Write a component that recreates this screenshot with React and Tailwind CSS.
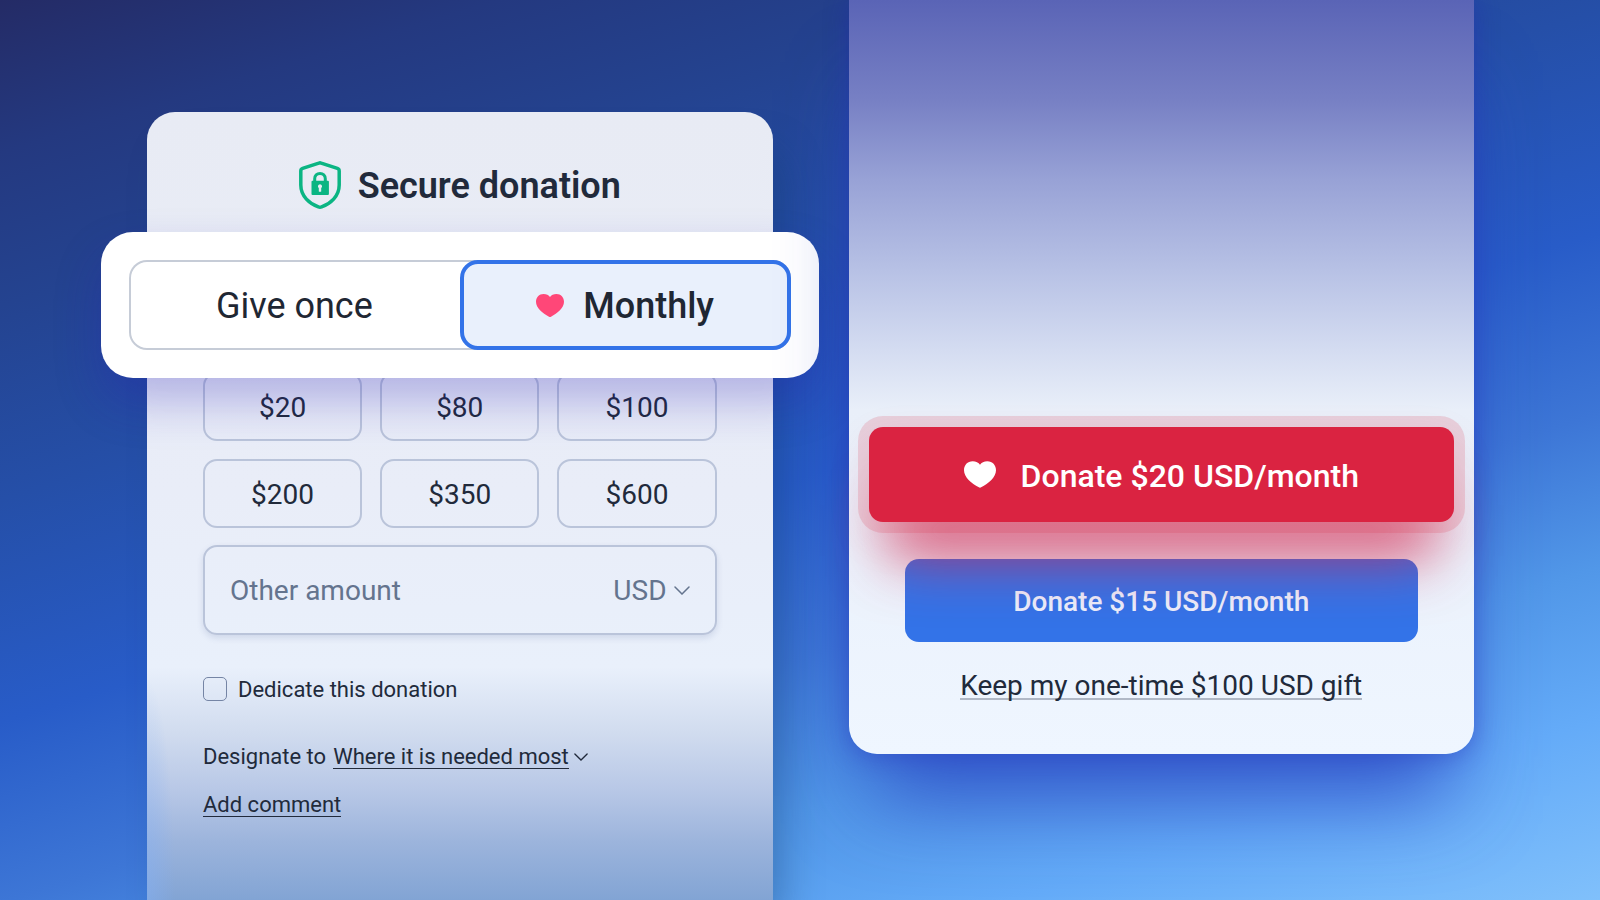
import { useState } from "react";

const AMOUNTS = ["$20", "$80", "$100", "$200", "$350", "$600"];

function Heart({ className }) {
  return (
    <svg viewBox="0 0 28 23" className={className} fill="currentColor" aria-hidden="true">
      <path d="M7.6 0C10.4 0 12.8 1.1 14 2.9C15.2 1.1 17.6 0 20.4 0C25 0 28 3.4 28 7.8C28 14 21.5 19.2 15 22.7C14.4 23.1 13.6 23.1 13 22.7C6.5 19.2 0 14 0 7.8C0 3.4 3 0 7.6 0Z" />
    </svg>
  );
}

function Shield() {
  return (
    <svg viewBox="0 0 42 48" className="h-12 w-[42px] text-[#0bb583]" fill="none" aria-hidden="true">
      <path
        d="M19.8 2.1C20.6 1.8 21.4 1.8 22.2 2.1L38.4 7.4C39.6 7.8 40.2 8.6 40.2 9.9V24C40.2 35.4 31.2 42.8 22.6 45.9C21.5 46.3 20.5 46.3 19.4 45.9C10.8 42.8 1.8 35.4 1.8 24V9.9C1.8 8.6 2.4 7.8 3.6 7.4Z"
        stroke="currentColor"
        strokeWidth="3.5"
      />
      <path d="M15.7 21V17.7C15.7 14.7 18 12.4 21 12.4C24 12.4 26.3 14.7 26.3 17.7V21" stroke="currentColor" strokeWidth="3" />
      <path
        fillRule="evenodd"
        d="M13.5 19.8H28.9Q29.9 19.8 29.9 20.8V33Q29.9 34 28.9 34H13.5Q12.5 34 12.5 33V20.8Q12.5 19.8 13.5 19.8ZM21 23.2A2.1 2.1 0 0 0 19.8 27V30.2Q19.8 30.8 20.4 30.8H21.6Q22.2 30.8 22.2 30.2V27A2.1 2.1 0 0 0 21 23.2Z"
        fill="currentColor"
      />
    </svg>
  );
}

function Chevron({ className }) {
  return (
    <svg viewBox="0 0 16 9" className={className} fill="none" stroke="currentColor" aria-hidden="true">
      <path d="M1 1L8 8L15 1" strokeWidth="1.5" strokeLinecap="round" />
    </svg>
  );
}

export default function App() {
  const [monthly, setMonthly] = useState(true);
  const [amount, setAmount] = useState("");

  return (
    <div className="flex min-h-screen items-stretch gap-[76px] overflow-hidden bg-[linear-gradient(163deg,#242b66_0%,#243980_11%,#244390_22%,#254fa8_36%,#285cc8_52%,#3d76d6_65%,#5197e8_76%,#64abf8_87%,#80c0fb_100%)] pr-[126px] pl-[147px] font-[Roboto,sans-serif] text-[#212a3b]">
      <form
        onSubmit={(e) => e.preventDefault()}
        className="relative isolate mt-28 flex-1 rounded-t-[28px] bg-[radial-gradient(28px_220px_at_0_100%,rgba(130,175,245,0.5),transparent),linear-gradient(180deg,#e8ebf4_0px,#e9edf8_380px,#e9f0fb_555px,#d1dcef_620px,#b7c7e6_680px,#9cb4dc_730px,#82a4d4_788px)] px-14 pt-[49px] pb-20 shadow-[16px_32px_40px_-8px_rgba(20,60,110,0.4)]"
      >
        <h1 className="flex h-12 items-center justify-center gap-[17px] text-4xl leading-[44px] font-semibold">
          <Shield />
          <span className="pt-0.5">Secure donation</span>
        </h1>

        <div className="relative z-10 -mx-[102px] mt-[23px] rounded-[32px] bg-white p-7 shadow-[0_24px_46px_rgba(40,30,180,0.28)]">
          <div className="grid h-[90px] grid-cols-2 rounded-[18px] text-4xl text-[#1f2733] shadow-[inset_0_0_0_2px_#c6ccd7]">
            <button type="button" aria-pressed={!monthly} onClick={() => setMonthly(false)} className="pt-0.5">
              Give once
            </button>
            <button
              type="button"
              aria-pressed={monthly}
              onClick={() => setMonthly(true)}
              className="flex items-center justify-center gap-[19px] rounded-[18px] border-4 border-[#3373e8] bg-[#e9f0fc] font-medium"
            >
              <Heart className="h-[23px] w-7 text-[#ff4778]" />
              <span className="pt-0.5">Monthly</span>
            </button>
          </div>
        </div>

        <div className="-mt-[6px] grid grid-cols-3 gap-[18px] text-[28px]">
          {AMOUNTS.map((a) => (
            <button
              key={a}
              type="button"
              onClick={() => setAmount(a.slice(1))}
              className="h-[69px] rounded-[14px] border-2 border-[#bac4da] pt-0.5"
            >
              {a}
            </button>
          ))}
        </div>

        <div className="mt-[17px] flex h-[90px] items-center gap-[7px] rounded-[14px] border-2 border-[#bac4da] px-[25px] text-[28px] text-[#64748e] shadow-[0_3px_6px_rgba(60,80,140,0.15)]">
          <input
            aria-label="Other amount"
            placeholder="Other amount"
            value={amount}
            onChange={(e) => setAmount(e.target.value)}
            className="min-w-0 flex-1 bg-transparent pt-0.5 outline-none placeholder:text-[#64748e]"
          />
          <select aria-label="Currency" className="appearance-none bg-transparent pt-0.5 [field-sizing:content]">
            <option>USD</option>
          </select>
          <Chevron className="h-[9px] w-4" />
        </div>

        <label className="mt-[42px] flex h-6 items-center gap-[11px] text-[22px]">
          <input type="checkbox" className="size-6 appearance-none rounded-[5px] border border-[#7585a5] checked:bg-[#3373e8]" />
          Dedicate this donation
        </label>

        <div className="mt-11 flex h-6 items-center text-[22px] leading-6">
          <label htmlFor="designation">Designate to</label>
          <select
            id="designation"
            className="ml-[7px] h-6 appearance-none border-b border-[#212a3b] bg-transparent leading-6 [field-sizing:content]"
          >
            <option>Where it is needed most</option>
          </select>
          <Chevron className="ml-[5px] h-2 w-[14px]" />
        </div>

        <a href="#comment" className="mt-6 inline-block h-6 border-b border-[#212a3b] text-[22px] leading-6">
          Add comment
        </a>
      </form>

      <section
        aria-label="Donation upgrade"
        className="relative flex-1 self-start rounded-b-[28px] bg-[linear-gradient(180deg,#5a64b6_0px,#7780c4_100px,#98a2d6_180px,#b7c1e5_270px,#d4dcf1_350px,#e9eff9_410px,#ebf2fc_560px,#eff6ff_754px)] px-14 pt-[427px] pb-[54px] shadow-[0_66px_84px_-24px_rgba(44,70,195,0.85),0_2px_24px_rgba(34,34,180,0.4)]"
      >
        <div className="flex flex-col">
          <button
            type="button"
            className="relative z-10 -mx-9 flex h-[95px] items-center justify-center gap-[25px] rounded-[14px] bg-[#da2341] text-[32px] font-medium text-white shadow-[0_0_0_11px_rgba(218,35,65,0.16),0_56px_58px_-20px_rgba(210,35,75,0.76),0_16px_44px_rgba(218,35,65,0.12)]"
          >
            <Heart className="h-[27px] w-8" />
            <span className="pt-0.5">Donate $20 USD/month</span>
          </button>
          <button type="button" className="mt-[37px] h-[83px] rounded-[14px] bg-[#3373e8] pt-0.5 text-[28px] font-medium text-[#eaf0fd]">
            Donate $15 USD/month
          </button>
          <a href="#keep" className="mt-[31px] self-center border-b-2 border-[#b0b8c6] text-[28px] leading-[25px]">
            Keep my one-time $100 USD gift
          </a>
        </div>
      </section>
    </div>
  );
}
